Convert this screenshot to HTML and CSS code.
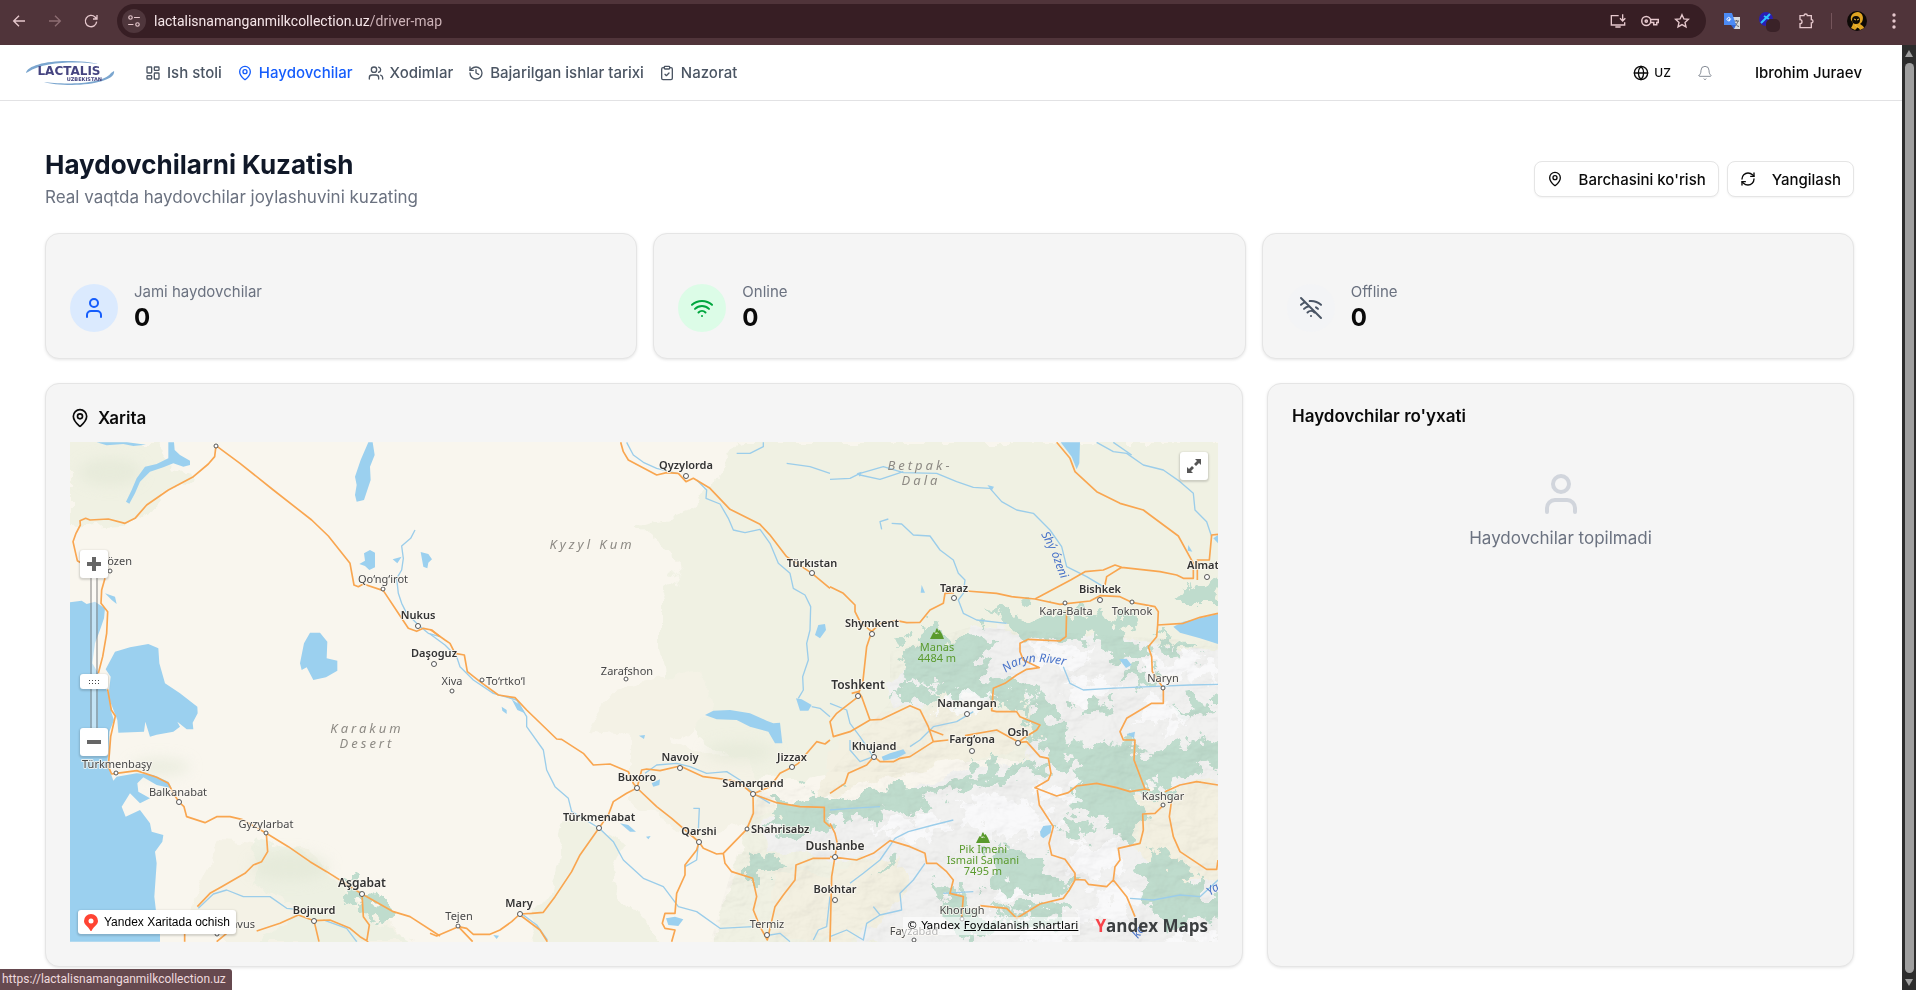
FILE: index.html
```html
<!DOCTYPE html>
<html lang="uz">
<head>
<meta charset="utf-8">
<title>Haydovchilarni Kuzatish</title>
<link rel="stylesheet" href="styles.css">
</head>
<body>
<svg class="sprite" aria-hidden="true">
  <symbol id="pin" viewBox="0 0 24 24"><path d="M20 10c0 4.993-5.539 10.193-7.399 11.799a1 1 0 0 1-1.202 0C9.539 20.193 4 14.993 4 10a8 8 0 0 1 16 0"/><circle cx="12" cy="10" r="3"/></symbol>
  <symbol id="user" viewBox="0 0 24 24"><path d="M19 21v-2a4 4 0 0 0-4-4H9a4 4 0 0 0-4 4v2"/><circle cx="12" cy="7" r="4"/></symbol>
  <symbol id="peak" viewBox="0 0 14 11"><path d="M0 11 2.500 6l1.200-2 1.400.6L6 1.500 7 0l1.600 3 1-1L12 6l2 5z"/><path d="M5 4.500 6.200 6 7 4.500 8.500 6" fill="none" stroke="#eef3e6" stroke-width=".8"/></symbol>
</svg>

<header class="chrome">
  <button class="chrome-btn" aria-label="Back"><svg class="ico" viewBox="0 0 24 24"><path d="M21 12H4M12 4l-8 8 8 8"/></svg></button>
  <button class="chrome-btn dim" aria-label="Forward"><svg class="ico" viewBox="0 0 24 24"><path d="M3 12h17M12 4l8 8-8 8"/></svg></button>
  <button class="chrome-btn" aria-label="Reload"><svg class="ico" viewBox="0 0 24 24"><path d="M20.500 13A8.500 8.500 0 1 1 18 6l2.500 2.500M21 3v6h-6"/></svg></button>
  <div class="omnibox">
    <button class="site-info" aria-label="Site information"><svg class="ico" viewBox="0 0 24 24"><circle cx="6" cy="6" r="3"/><path d="M12 6h10M2 18h9"/><circle cx="18" cy="18" r="3"/></svg></button>
    <span class="url">lactalisnamanganmilkcollection.uz<span class="url-path">/driver-map</span></span>
    <button class="chrome-btn" aria-label="Install"><svg class="ico" viewBox="0 0 24 24"><path d="M13 4H2v14h20v-4M8 21h8M19 2v9M15 8l4 4 4-4"/></svg></button>
    <button class="chrome-btn" aria-label="Passwords"><svg class="ico key" viewBox="0 0 24 24"><circle cx="7" cy="12" r="6"/><circle cx="7" cy="12" r="1.500"/><path d="M13 10h10v4h-2v3h-4v-3h-4"/></svg></button>
    <button class="chrome-btn" aria-label="Bookmark"><svg class="ico" viewBox="0 0 24 24"><path d="m12 2.500 2.800 6.300 6.800.7-5.100 4.600 1.500 6.800-6-3.500-6 3.500 1.500-6.800-5.100-4.600 6.800-.7z"/></svg></button>
  </div>
  <div class="extensions">
    <button class="chrome-btn" aria-label="Translate"><svg class="pic" viewBox="0 0 18 18"><path d="M8 5h9v12H11z" fill="#d9dadc"/><path d="M11 9h5M13.500 8v1M15 9c-.5 2-2 4-3.500 5M12 11c1 2 2 3 4 3.500" stroke="#5f6368" fill="none"/><path d="M1 1h8l4 12H1z" fill="#4c8bf5"/><path d="M8 13h5l-2 4z" fill="#3367d6"/><path d="M8.200 7H6v1h1.200A1.700 1.700 0 1 1 6.900 6" stroke="#fff" fill="none"/></svg></button>
    <button class="chrome-btn" aria-label="Extension"><svg class="pic wide" viewBox="0 0 22 22"><circle cx="8" cy="9" r="7" fill="#2a1fb4"/><path d="m3 13 9-9M6 6l5 3" stroke="#2fc3ff" stroke-width="2"/><rect x="8" y="9" width="14" height="13" rx="5" fill="#3a2228"/></svg></button>
    <button class="chrome-btn" aria-label="Extensions"><svg class="ico" viewBox="0 0 24 24"><path d="M3 4h6a2.500 2.500 0 0 1 5 0h6v6a2.500 2.500 0 0 1 0 5v7H3v-6a3 3 0 0 0 0-6z"/></svg></button>
    <span class="divider"></span>
    <button class="chrome-btn" aria-label="Profile"><svg class="avatar" viewBox="0 0 20 20"><circle cx="10" cy="10" r="10" fill="#0d0906"/><path d="M4 9C3 5 6 1 11 1c5 1 6 6 4 10l-2 2c2 1 4 3 4 4l-4 2-2-3-3 3-4-2c1-2 2-3 2-5z" fill="#e0a422"/><ellipse cx="9" cy="9" rx="4" ry="4" fill="#0d0906"/><path d="m7 8 2 1M10 9l2-1M8 14l4 3" stroke="#f0c040"/></svg></button>
    <button class="chrome-btn" aria-label="Menu"><svg class="pic" viewBox="0 0 18 18" fill="#e6c8cd"><circle cx="9" cy="3" r="1.700"/><circle cx="9" cy="9" r="1.700"/><circle cx="9" cy="15" r="1.700"/></svg></button>
  </div>
</header>

<div class="viewport">
<div class="page">
  <nav class="topbar">
    <a class="logo" href="#" aria-label="Lactalis">
      <svg viewBox="0 0 90 28"><path d="M1 14C2 7 20 2 42 2c14 0 24 1 31 3C60 3 20 1 3 13z" fill="#7ba6cf"/><path d="M89 12c2 8-18 14-42 14-12 0-22-1-28-3 14 2 58 4 67-9z" fill="#7ba6cf"/><text x="44" y="16" text-anchor="middle" class="logo-name">LACTALIS</text><text x="77" y="22" text-anchor="end" class="logo-sub">UZBEKISTAN</text></svg>
    </a>
    <div class="links">
      <a href="#"><svg class="ico" viewBox="0 0 24 24"><rect x="3" y="3" width="7" height="9" rx="1"/><rect x="14" y="3" width="7" height="5" rx="1"/><rect x="14" y="12" width="7" height="9" rx="1"/><rect x="3" y="16" width="7" height="5" rx="1"/></svg>Ish stoli</a>
      <a href="#" class="active"><svg class="ico"><use href="#pin"/></svg>Haydovchilar</a>
      <a href="#"><svg class="ico" viewBox="0 0 24 24"><path d="M16 21v-2a4 4 0 0 0-4-4H6a4 4 0 0 0-4 4v2"/><circle cx="9" cy="7" r="4"/><path d="M22 21v-2a4 4 0 0 0-3-3.870M16 3.130a4 4 0 0 1 0 7.750"/></svg>Xodimlar</a>
      <a href="#"><svg class="ico" viewBox="0 0 24 24"><path d="M3 12a9 9 0 1 0 9-9 9.750 9.750 0 0 0-6.740 2.740L3 8"/><path d="M3 3v5h5M12 7v5l4 2"/></svg>Bajarilgan ishlar tarixi</a>
      <a href="#"><svg class="ico" viewBox="0 0 24 24"><rect x="8" y="2" width="8" height="4" rx="1"/><path d="M16 4h2a2 2 0 0 1 2 2v14a2 2 0 0 1-2 2H6a2 2 0 0 1-2-2V6a2 2 0 0 1 2-2h2M9 14l2 2 4-4"/></svg>Nazorat</a>
    </div>
    <div class="account">
      <button class="lang"><svg class="ico" viewBox="0 0 24 24"><circle cx="12" cy="12" r="10"/><path d="M12 2a14.500 14.500 0 0 0 0 20 14.500 14.500 0 0 0 0-20M2 12h20"/></svg>UZ</button>
      <button class="bell" aria-label="Bildirishnomalar"><svg class="ico" viewBox="0 0 24 24"><path d="M10.268 21a2 2 0 0 0 3.464 0M3.262 15.326A1 1 0 0 0 4 17h16a1 1 0 0 0 .740-1.673C19.410 13.956 18 12.499 18 8A6 6 0 0 0 6 8c0 4.499-1.411 5.956-2.738 7.326"/></svg></button>
      <button class="profile">Ibrohim Juraev</button>
    </div>
  </nav>

  <main class="content">
    <div class="heading">
      <div>
        <h1>Haydovchilarni Kuzatish</h1>
        <p>Real vaqtda haydovchilar joylashuvini kuzating</p>
      </div>
      <div class="actions">
        <button class="outline"><svg class="ico"><use href="#pin"/></svg>Barchasini ko'rish</button>
        <button class="outline"><svg class="ico" viewBox="0 0 24 24"><path d="M3 12a9 9 0 0 1 9-9 9.750 9.750 0 0 1 6.740 2.740L21 8"/><path d="M21 3v5h-5M21 12a9 9 0 0 1-9 9 9.750 9.750 0 0 1-6.740-2.740L3 16"/><path d="M8 16H3v5"/></svg>Yangilash</button>
      </div>
    </div>

    <section class="stats">
      <div class="card stat"><span class="badge blue"><svg class="ico"><use href="#user"/></svg></span><div><p>Jami haydovchilar</p><strong>0</strong></div></div>
      <div class="card stat"><span class="badge green"><svg class="ico" viewBox="0 0 24 24"><path d="M12 20h.010M2 8.820a15 15 0 0 1 20 0M5 12.859a10 10 0 0 1 14 0M8.500 16.429a5 5 0 0 1 7 0"/></svg></span><div><p>Online</p><strong>0</strong></div></div>
      <div class="card stat"><span class="badge gray"><svg class="ico" viewBox="0 0 24 24"><path d="M12 20h.010M8.500 16.429a5 5 0 0 1 7 0M5 12.859a10 10 0 0 1 5.170-2.690M19 12.859a10 10 0 0 0-2.007-1.523M2 8.820a15 15 0 0 1 4.177-2.643M22 8.820a15 15 0 0 0-11.288-3.764M2 2l20 20"/></svg></span><div><p>Offline</p><strong>0</strong></div></div>
    </section>

    <section class="panels">
      <div class="card map-card">
        <h2><svg class="ico"><use href="#pin"/></svg>Xarita</h2>
        <div class="map">
          <svg class="map-canvas" viewBox="0 0 1148 500" preserveAspectRatio="xMidYMid slice">
            <defs>
              <filter id="rough" x="-5%" y="-5%" width="110%" height="110%"><feTurbulence type="fractalNoise" baseFrequency=".035" numOctaves="4" seed="4"/><feDisplacementMap in="SourceGraphic" scale="26" xChannelSelector="R" yChannelSelector="G"/></filter>
              <filter id="ragged" x="-5%" y="-5%" width="110%" height="110%"><feTurbulence type="fractalNoise" baseFrequency=".055" numOctaves="5" seed="7"/><feDisplacementMap in="SourceGraphic" scale="48" xChannelSelector="R" yChannelSelector="G"/></filter>
              <filter id="soft" x="-10%" y="-10%" width="120%" height="120%"><feGaussianBlur stdDeviation="7"/></filter>
              <filter id="relief" x="0" y="0" width="100%" height="100%"><feTurbulence type="fractalNoise" baseFrequency=".022 .035" numOctaves="5" seed="9" result="n"/><feDiffuseLighting in="n" surfaceScale="9" lighting-color="#fff" result="l"><feDistantLight azimuth="225" elevation="62"/></feDiffuseLighting><feComposite in="l" in2="SourceGraphic" operator="in"/></filter>
              <path id="shy" d="M971 92C978 105 983 113 985 122 988 131 991 137 998 150"/>
              <path id="naryn" d="M936 231C948 220 966 216 1002 225"/>
            </defs>
            <rect width="1148" height="500" fill="#f9f6ee"/>
            <g filter="url(#rough)">
              <path fill="#f0f1e3" d="M565 84 620 70 668 0H1160V320H830L770 330 690 340 640 300 600 270 590 200 590 160 610 120ZM0 0H90L120 40 60 80 0 85ZM500 370 560 400 540 440 600 510H450L480 450ZM680 370H1160V510H640Z"/>
              <path fill="#f4f2e6" d="M150 400 240 410 290 460 350 510H170L120 470ZM540 250 630 230 640 275 600 300 520 290ZM560 290 680 320 700 370 620 400 560 360Z"/>
              <path fill="#eaf0df" d="M190 395 250 420 290 470 340 500H190L230 470 180 440Z" opacity=".7"/>
            </g>
            <g filter="url(#rough)">
              <path fill="#f1f1f0" d="M905 187 960 192 1010 190 1070 200 1160 215V345L1080 345 1045 380 1080 420 1160 430V510H870L790 500 830 420 700 410 690 380 770 370 880 335 955 320 975 290 960 260 900 240 830 270 820 240 880 215Z"/>
              <path fill="#f3f0e1" d="M775 290 850 262 940 265 965 290 940 312 860 325 800 340 750 360 760 320ZM1065 355 1160 335V430L1110 440 1070 410ZM700 430 760 430 830 410 830 460 780 500H700Z"/>
            </g>
            <g filter="url(#ragged)">
              <path fill="#bfdccd" d="M830 207 850 185 880 192 910 187 930 200 905 212 915 240 900 262 870 248 835 240ZM915 165 960 172 1000 170 1065 178 1050 200 1000 197 950 195ZM1105 150 1130 140 1160 145V162H1115ZM1080 190 1110 200 1140 215 1110 212ZM830 240 870 252 860 262 820 255ZM755 360 800 346 850 345 900 335 925 322 975 318 980 328 950 335 890 347 850 362 790 376 740 384 690 384ZM700 355 745 352 765 366 740 395 712 392ZM965 255 985 270 1000 302 1050 300 1080 310 1160 290V322L1100 340 1075 350 1060 395 1045 398 1035 375 1000 365 1005 330 980 315 960 290ZM925 400 965 415 1005 445 960 455 915 442ZM1080 408 1112 420 1122 445 1160 460V475L1090 480 1065 460 1078 435ZM905 235 950 238 965 258 925 268 900 252ZM690 410 714 416 702 434 680 434ZM270 435 300 445 325 468 310 478 280 458ZM868 445 905 450 902 470 935 480 900 505 875 482ZM1010 256 1045 262 1038 274 1005 268ZM1030 190 1085 210 1060 218 1025 205ZM990 375 1025 380 1015 394 990 388ZM925 470 1000 468 980 484 935 482ZM830 360 870 352 862 366 830 372ZM1060 225 1090 235 1075 245 1050 236ZM1100 262 1148 252V268L1110 275ZM800 425 830 418 825 432Z"/>
              <path fill="#fafafb" opacity=".85" d="M950 200 1030 212 1010 222 960 218ZM1070 215 1148 220V235L1090 238ZM1000 235 1045 240 1020 258 985 248ZM890 360 955 358 995 385 950 398 895 382ZM960 342 1015 350 990 366ZM1000 400 1045 400 1055 428 1005 432ZM1040 440 1075 450 1052 482 1005 478ZM1080 255 1125 270 1100 288 1065 280ZM930 445 965 455 920 468ZM800 385 860 372 880 390 830 400ZM960 480 1010 485 990 505 950 500ZM1110 480 1148 488V505H1100ZM890 250 930 255 900 275 870 266Z"/>
            </g>
            <path filter="url(#relief)" opacity=".12" class="relief" d="M820 210 900 185 1148 200V500H640L670 400 690 350 830 330 760 330 820 260Z"/>
            <g filter="url(#soft)" fill="#dfe5d3" opacity=".5"><ellipse cx="220" cy="425" rx="40" ry="14"/><ellipse cx="90" cy="325" rx="30" ry="9"/><ellipse cx="670" cy="310" rx="35" ry="10"/><ellipse cx="40" cy="30" rx="32" ry="14"/></g>

            <g class="water" transform="translate(-30 -12) scale(.33333)">
              <path d="M170 37H262L318 44 280 48 250 42 200 46ZM385 37H402L404 60 420 75 450 92V105L430 110 400 100 370 112 330 125 300 155 285 190 268 221 258 215 275 180 290 145 315 110 350 102 385 85ZM985 37H998L1004 75 990 110 992 150 972 210 950 215 945 195 950 165 945 140 962 90ZM958 402 975 392 972 370 990 360 1005 368V412L988 420 975 408ZM1142 366 1165 372 1176 388 1165 398 1162 415 1150 410ZM1058 388 1085 380 1072 400ZM792 640 810 608 840 608 862 635 860 685 892 692V722L858 742 820 750 800 712 785 720 780 700ZM195 490 225 500 230 522 215 510Z"/>
              <path d="M197 718 225 665 270 652 325 642 355 655 358 700 375 760 420 790 472 830 473 850 458 878 460 898 440 898 412 875 420 890 400 905 350 914 330 920 316 875 312 905 235 908 232 870 205 800 212 740Z"/>
              <path d="M90 517 125 512 140 522 165 515 195 535 192 565 180 600 165 640 157 700 172 725 205 790 215 850 222 870 208 905 205 960 202 1000 220 1052 230 1040 290 1030 340 1035 385 1055 395 1075 350 1065 310 1042 292 1060 295 1085 330 1105 300 1120 270 1090 245 1130 257 1160 300 1140 330 1180 335 1205 370 1215 367 1235 345 1265 350 1300 343 1400 350 1460 360 1500V1535H90Z"/>
            </g>
            <g class="water" transform="translate(360 -12) scale(.33333)">
              <path d="M825 855 850 842 900 840 960 850 1010 872 1030 880 1050 878 1057 940 1035 940 1015 905 960 890 920 870 860 868ZM1155 615 1165 585 1185 582 1188 600 1170 625ZM1098 805 1115 808 1145 825 1135 842 1110 842ZM665 1060 690 1048 688 1065 670 1070ZM570 1180 595 1185 618 1205 600 1205ZM708 1465 735 1460 760 1468 745 1488 715 1485ZM627 917 645 915 642 927ZM215 830 230 840 230 852 217 842ZM245 808 270 825 285 850 262 840ZM648 1220 662 1218 655 1228ZM190 1515 207 1517 200 1527Z"/>
            </g>
            <g class="water" transform="translate(760 -12) scale(.33333)">
              <path d="M692 37H750L748 100 740 118 725 80ZM1030 590 1060 575 1164 552V642L1110 625 1050 608ZM868 688 890 686 905 705 888 714ZM275 465 285 488 272 488ZM80 130 95 125 90 140ZM472 165 492 170 485 182ZM1075 345 1087 365 1073 362ZM1150 325 1164 315V340ZM155 980 180 970 220 958 228 970 200 985 160 992ZM630 1205 640 1188 665 1185 662 1208 640 1225 632 1218ZM890 912 915 905 912 925Z"/>
            </g>
            <g class="river">
              <path transform="translate(-30 -12) scale(.33333)" d="M1125 300 1112 325 1085 348 1090 385 1085 420 1070 445 1075 490 1085 520 1100 550 1135 585 1165 610 1200 620M475 1435 520 1392 560 1380 610 1400 690 1400 740 1435 770 1438M850 1470 920 1495 950 1535"/>
              <path transform="translate(360 -12) scale(.33333)" d="M590 37 610 75 640 97 680 115 740 130M800 150 830 180 828 205 870 222 895 265 910 300 945 308 990 298 1020 340 1045 400 1080 430 1090 475 1125 495 1142 530 1140 600 1130 640 1135 690 1118 740 1120 780 1105 805M1145 830 1170 835 1200 860M0 612 45 645 80 680 90 710 130 750 190 790 260 810 290 860 290 890 340 960 350 1020 375 1070 415 1105 425 1145 507 1194 550 1235 580 1290 640 1345 700 1370 745 1430 800 1445 870 1495 970 1490M790 1135H808L805 1200M645 1030 680 1005 740 1000 780 1010 830 1030 890 1025 930 1050 970 1090 1020 1120M920 70 960 70 1000 50V37M1070 100 1140 110 1200 130M805 1240 800 1290 765 1310M280 1455 320 1485 352 1530M1020 1515 1050 1510 1080 1535M1150 1530 1165 1500 1190 1490 1200 1400"/>
              <path transform="translate(760 -12) scale(.33333)" d="M0 148 60 145 90 130 160 110 220 128 320 130 380 155 430 172 480 175 515 215 560 240 610 250 660 300 695 350 710 410 770 440 820 470M90 135 150 148 220 125M155 298 150 275 175 267M185 280 215 282 250 315 300 318 330 360 370 390 385 430 405 450 400 490 385 510 400 550 440 570 530 580M800 37 850 65 890 70 940 105 1000 120 1050 155 1090 190 1095 240 1130 275 1145 320M850 37 905 75M700 710 720 760 760 780 840 775 960 770 1080 765 1164 763M430 845 380 875 310 890 270 930 240 950M0 820 50 840 60 880 90 920 130 980M60 930 60 960 90 995 130 980M0 1140 60 1135 150 1130M195 1225 235 1205 310 1185 370 1170M195 1225 150 1290 100 1330 60 1360M285 1300 250 1350 210 1390 215 1440 150 1455 110 1480 100 1530 50 1500 0 1520M130 1430 150 1455M900 1405 970 1410 1050 1395 1110 1400 1164 1350M430 1385 340 1390"/>
            </g>
            <g class="road">
              <path transform="translate(-30 -12) scale(.33333)" d="M528 47 524 80 505 102 460 140 385 180 320 225 285 265 255 280 205 267 150 270 137 265 120 272 121 285 108 310 99 335 112 392 125 400M528 47 600 100 700 180 815 270 865 318 930 400 942 465 955 470 970 462 1030 482 1075 550 1105 595 1130 604 1150 595 1175 600 1200 620M195 445 185 480 183 520 203 545 200 610 188 680 175 730M203 778 214 840 226 858 212 920 205 1010 215 1032 229 1030 290 1022 350 1042 385 1060 400 1090 417 1116 432 1130 440 1160 495 1178 530 1160 570 1160 605 1168 679 1210 745 1250 810 1295 860 1325 966 1392 1060 1445 1110 1460 1200 1518M679 1210 683 1265 665 1295 640 1305 615 1330 545 1370 510 1390 472 1430M530 1535 560 1510M650 1503 720 1480 775 1455 822 1472 870 1470 930 1495 960 1520 985 1535M822 1472 837 1535M966 1392 970 1460 988 1485 980 1535M434 1510V1535"/>
              <path transform="translate(360 -12) scale(.33333)" d="M572 37 580 65 595 90 680 135 710 128 745 130 768 155 790 145 840 175 900 238 990 283 1020 315 1070 380 1146 430 1200 475M0 598 45 630 60 640 75 670 103 675 112 725 150 755 205 795 255 803 290 840 380 927 395 928 460 970 490 1005 540 1002 595 1025 610 1060 621 1074 680 1130 725 1165 807 1236M621 1074 590 1090 550 1115 535 1155 507 1194 450 1275 425 1325 375 1400 340 1447 305 1450 270 1452 245 1475 210 1500 180 1513H130L110 1495 85 1490 20 1518 0 1510M270 1455 330 1500 352 1535M85 1490 128 1535M621 1074 635 1020 650 1017 690 1022 750 1008 820 1040 900 1050 930 1060 969 1092 1040 1118 1110 1130 1183 1132V1175L1200 1190M969 1092 1020 1070 1050 1030 1086 1012 1105 1000 1160 935 1185 942 1200 930M969 1092 970 1150 950 1198 880 1270 860 1272 820 1255 807 1236 800 1260 765 1305V1335L740 1390 735 1450H705L697 1480 705 1495 735 1500 725 1535M880 1270 885 1300 905 1325 968 1345 980 1400 970 1440 990 1490 1012 1530 1035 1430 1060 1395 1095 1350 1098 1305 1150 1285H1200"/>
              <path transform="translate(760 -12) scale(.33333)" d="M0 470 40 490 75 525V545L90 575 125 605 110 650 98 760 85 790M125 605 150 580 200 572 230 578 270 577 300 540 340 520 345 490 372 488M410 483 500 490 545 500 615 507 690 523 780 513 810 497 870 500 905 517 975 530 985 545 983 585 1060 580 1110 562 1164 550M615 507 722 450 765 425 820 420 855 405 875 412 990 425 1040 435 1060 445H1090V400L1045 318 960 255 940 240 870 220 800 185 735 125 720 85 680 37M875 412 830 440 825 465M1102 450V390H1138L1145 315 1164 313M983 585 980 620 955 650 965 680 967 725 1000 775V820L965 820 890 865 870 905 880 930H915L912 990 945 1077M710 540 708 620 690 633 595 628 570 640V665L580 690 628 713 590 718 560 735 525 760 490 775 485 842 500 845 560 845 570 860 630 885 620 900 580 925 564 938 590 935 630 980 655 985 663 1030 655 1050 615 1073 680 1098 715 1088 740 1068 800 1060 860 1073 900 1085 945 1077 960 1080M622 1080 628 1125 670 1190 657 1240 665 1275 705 1288 735 1330V1348L765 1350 775 1363 830 1370 850 1350 855 1310 870 1290 865 1255 930 1240 940 1200 938 1152 975 1150 1000 1126M850 1350 890 1400 915 1460M735 1350 718 1380 700 1405 630 1422 560 1465 530 1435 450 1427M1005 1085 1050 1065 1100 1055 1164 1065M1025 1110 1018 1160 1030 1220 1050 1265 1130 1318H1160L1164 1290M0 1280 80 1290 130 1270 180 1232 240 1250 285 1270 290 1300H320L350 1325 370 1350 360 1390 400 1400 395 1460M85 800 20 850 0 875 10 920 60 905 120 870 95 800 85 785 65 790M120 870 155 868 240 827 270 840 295 890 310 935 355 930M295 898 340 915M310 935 240 980 210 985 190 995H150L132 980 110 1005 55 1030 45 1060 0 1090M405 917 500 900 564 935M0 1180 15 1210 22 1240 15 1280 5 1340 0 1535"/>
            </g>

            <g class="dot">
              <circle cx="146" cy="4" r="2"/><circle cx="40" cy="129" r="2"/><circle cx="313" cy="147" r="2"/><circle cx="348" cy="184" r="2.500"/><circle cx="364" cy="222" r="2.500"/><circle cx="382" cy="249" r="2"/><circle cx="412" cy="238" r="2"/><circle cx="46" cy="331" r="2"/><circle cx="109" cy="360" r="2.500"/><circle cx="196" cy="391" r="2"/><circle cx="292" cy="452" r="2.500"/><circle cx="244" cy="479" r="2.500"/><circle cx="147" cy="492" r="2"/><circle cx="616" cy="34" r="2.500"/><circle cx="742" cy="131" r="2.500"/><circle cx="556" cy="237" r="2"/><circle cx="610" cy="326" r="2.500"/><circle cx="567" cy="346" r="2.500"/><circle cx="722" cy="325" r="2.500"/><circle cx="683" cy="352" r="2.500"/><circle cx="529" cy="386" r="2.500"/><circle cx="629" cy="400" r="2.500"/><circle cx="677" cy="387" r="2"/><circle cx="765" cy="415" r="2.500"/><circle cx="765" cy="458" r="2.500"/><circle cx="450" cy="472" r="2.500"/><circle cx="388" cy="484" r="2"/><circle cx="697" cy="493" r="2.500"/><circle cx="802" cy="192" r="2.500"/><circle cx="884" cy="156" r="2.500"/><circle cx="788" cy="254" r="2.500"/><circle cx="995" cy="161" r="2"/><circle cx="1030" cy="158" r="2.500"/><circle cx="1062" cy="160" r="2"/><circle cx="1137" cy="135" r="2.500"/><circle cx="1093" cy="246" r="2"/><circle cx="897" cy="272" r="2.500"/><circle cx="902" cy="309" r="2.500"/><circle cx="948" cy="301" r="2.500"/><circle cx="804" cy="315" r="2.500"/><circle cx="1093" cy="363" r="2"/><circle cx="892" cy="477" r="2"/><circle cx="844" cy="498" r="2"/>
            </g>
            <g class="town">
              <text x="62" y="123" class="end">Jańaözen</text><text x="313" y="141">Qo‘ng‘irot</text><text x="382" y="243">Xiva</text><text x="416" y="243" class="start">To‘rtko‘l</text><text x="47" y="326">Türkmenbaşy</text><text x="108" y="354">Balkanabat</text><text x="196" y="386">Gyzylarbat</text><text x="185" y="486" class="end">Gonbad-e Kavus</text><text x="557" y="233">Zarafshon</text><text x="389" y="478">Tejen</text><text x="697" y="486">Termiz</text><text x="996" y="173">Kara-Balta</text><text x="1062" y="173">Tokmok</text><text x="1093" y="240">Naryn</text><text x="1093" y="358">Kashgar</text><text x="892" y="472">Khorugh</text><text x="844" y="493">Fayzabad</text>
            </g>
            <g class="town city">
              <text x="348" y="177">Nukus</text><text x="364" y="215">Daşoguz</text><text x="244" y="472">Bojnurd</text><text x="616" y="27">Qyzylorda</text><text x="742" y="125">Türkıstan</text><text x="610" y="319">Navoiy</text><text x="567" y="339">Buxoro</text><text x="722" y="319">Jizzax</text><text x="683" y="345">Samarqand</text><text x="529" y="379">Türkmenabat</text><text x="629" y="393">Qarshi</text><text x="681" y="391" class="start">Shahrisabz</text><text x="765" y="451">Bokhtar</text><text x="449" y="465">Mary</text><text x="802" y="185">Shymkent</text><text x="884" y="150">Taraz</text><text x="897" y="265">Namangan</text><text x="902" y="301">Farg‘ona</text><text x="948" y="294">Osh</text><text x="804" y="308">Khujand</text><text x="1030" y="151">Bishkek</text><text x="1117" y="127" class="start">Almaty</text>
            </g>
            <g class="town capital"><text x="292" y="445">Aşgabat</text><text x="765" y="408">Dushanbe</text><text x="788" y="247">Toshkent</text></g>
            <g class="desert"><text x="522" y="107">Kyzyl Kum</text><text x="297" y="291">Karakum</text><text x="297" y="306">Desert</text><text x="850" y="28">Betpak-</text><text x="851" y="43">Dala</text></g>
            <g class="river-name"><text><textPath href="#shy">Shý ózeni</textPath></text><text><textPath href="#naryn">Naryn River</textPath></text><text transform="translate(1140 454) rotate(-35)">Ya</text><text transform="translate(1068 497) rotate(-55)">ke</text></g>
            <g class="peak"><use href="#peak" x="860" y="186" width="14" height="11"/><text x="867" y="209">Manas</text><text x="867" y="220">4484 m</text><use href="#peak" x="906" y="390" width="14" height="11"/><text x="913" y="411">Pik Imeni</text><text x="913" y="422">Ismail Samani</text><text x="913" y="433">7495 m</text></g>
          </svg>
          <div class="zoom">
            <button class="map-btn" aria-label="Yaqinlashtirish"><svg class="glyph" viewBox="0 0 14 14"><path d="M7 0v14M0 7h14"/></svg></button>
            <input type="range" min="0" max="100" value="29" aria-label="Masshtab">
            <button class="map-btn" aria-label="Uzoqlashtirish"><svg class="glyph" viewBox="0 0 14 14"><path d="M0 7h14"/></svg></button>
          </div>
          <button class="map-btn fullscreen" aria-label="To'liq ekran"><svg class="arrows" viewBox="0 0 16 16"><path d="M9 1h6v6l-2-2-3 3-2-2 3-3zM7 15H1V9l2 2 3-3 2 2-3 3z"/></svg></button>
          <button class="open-map"><svg viewBox="0 0 14 17"><path d="M7 0a7 7 0 0 1 7 7c0 4-4 5-6 9a1 1 0 0 1-2 0C4 12 0 11 0 7a7 7 0 0 1 7-7z" fill="#f43"/><circle cx="7" cy="7" r="2.500" fill="#fff"/></svg>Yandex Xaritada ochish</button>
          <div class="credits"><span class="terms">© Yandex <a href="#">Foydalanish shartlari</a></span><a class="brand" href="#"><span>Y</span>andex Maps</a></div>
        </div>
      </div>
      <div class="card list-card">
        <h2>Haydovchilar ro'yxati</h2>
        <div class="empty"><svg class="ico"><use href="#user"/></svg><p>Haydovchilar topilmadi</p></div>
      </div>
    </section>
  </main>
</div>
<div class="scrollbar"><span class="arrow up"></span><span class="thumb"></span><span class="arrow down"></span></div>
</div>
<div class="status">https://lactalisnamanganmilkcollection.uz</div>
</body>
</html>
```
FILE: styles.css
```css
* { box-sizing: border-box; }
body { margin: 0; display: flex; flex-direction: column; min-height: 100vh; background: #fff; color: #0a0a0a; font-family: Inter, "Noto Sans", sans-serif; }
h1, h2, p { margin: 0; }
button { font: inherit; color: inherit; background: none; border: 0; padding: 0; display: inline-flex; align-items: center; justify-content: center; }
a { color: inherit; text-decoration: none; }
.sprite { position: absolute; width: 0; height: 0; }
.ico { width: 16px; height: 16px; flex: none; fill: none; stroke: currentColor; stroke-width: 2; stroke-linecap: round; stroke-linejoin: round; }

/* Browser bar */
.chrome { display: flex; align-items: center; height: 45px; padding: 0 10px 3px 7px; background: #50343a; color: #e6c8cd; }
.chrome-btn { width: 24px; height: 24px; flex: none; }
.chrome > .chrome-btn { margin-right: 12px; }
.chrome .ico { stroke-width: 2; stroke-linecap: butt; stroke-linejoin: miter; }
.chrome .key { width: 18px; height: 18px; }
.dim { color: #8d6d73; }
.omnibox { flex: 1; display: flex; align-items: center; gap: 8px; height: 34px; margin-left: 2px; padding: 0 12px 0 5px; border-radius: 17px; background: #371e24; }
.site-info { width: 24px; height: 24px; border-radius: 12px; background: #4f363c; }
.site-info .ico { width: 14px; height: 14px; }
.url { flex: 1; font: 14px Roboto, "Noto Sans", sans-serif; color: #f6e6e9; }
.url-path { color: #cdb3b8; }
.extensions { display: flex; align-items: center; gap: 13px; padding-left: 14px; }
.pic { width: 18px; height: 18px; }
.wide { width: 22px; height: 22px; }
.avatar { width: 20px; height: 20px; }
.divider { width: 1px; height: 16px; background: #75555b; }

/* Viewport */
.viewport { flex: 1; display: flex; }
.page { flex: 1; min-width: 0; display: flex; flex-direction: column; }
.scrollbar { width: 14px; display: flex; flex-direction: column; align-items: center; gap: 6px; padding: 5px 0 4px; background: #2c2c2c; }
.thumb { width: 9px; flex: 1; border-radius: 5px; background: #9f9f9f; }
.arrow { border: 4px solid transparent; }
.up { border-top: 0; border-bottom: 7px solid #9f9f9f; }
.down { border-bottom: 0; border-top: 7px solid #9f9f9f; }

/* Navigation */
.topbar { display: flex; align-items: center; height: 56px; padding: 0 40px 0 25px; border-bottom: 1px solid #e2e2e4; font-size: 15px; font-weight: 500; }
.logo svg { display: block; width: 90px; height: 28px; }
.logo { margin-right: 30px; }
.logo-name { font: bold 12px "DejaVu Sans", sans-serif; fill: #454480; }
.logo-sub { font: bold 5px "DejaVu Sans", sans-serif; fill: #454480; }
.links { display: flex; gap: 15px; color: #4b5563; }
.links a { display: flex; align-items: center; gap: 6px; }
.links .active { color: #155dfc; }
.account { margin-left: auto; display: flex; align-items: center; }
.lang { gap: 5px; font-size: 12px; }
.bell { margin: 0 42px 0 26px; color: #4b5563; }
.bell .ico { stroke-width: 1; }

/* Content */
.content { flex: 1; padding: 48px 48px 23px 45px; }
.heading { display: flex; align-items: center; justify-content: space-between; margin-bottom: 24px; }
h1 { font-size: 26px; line-height: 32px; font-weight: 700; color: #101828; }
.heading p { font-size: 17px; line-height: 24px; color: #6b7280; margin-top: 4px; }
.actions { display: flex; gap: 8px; }
.outline { gap: 16px; height: 36px; padding: 0 12px; border: 1px solid #e5e5e5; border-radius: 8px; background: #fff; font-size: 15px; font-weight: 500; box-shadow: 0 1px 2px #0000000d; }
.card { border: 1px solid #e5e5e5; border-radius: 14px; background: #f5f5f5; box-shadow: 0 1px 3px #0000001a; padding: 24px; }
.stats { display: grid; grid-template-columns: repeat(3, 1fr); gap: 16px; margin-bottom: 24px; }
.stat { display: flex; align-items: center; gap: 16px; padding-top: 48px; }
.badge { width: 48px; height: 48px; border-radius: 24px; display: flex; align-items: center; justify-content: center; }
.badge .ico { width: 24px; height: 24px; }
.blue { background: #dbeafe; color: #155dfc; }
.green { background: #dcfce7; color: #00a63e; }
.gray { background: #f3f4f6; color: #4a5565; }
.stat p { font-size: 15px; line-height: 20px; color: #6b7280; }
.stat strong { display: block; font-size: 24px; line-height: 32px; }
.panels { display: grid; grid-template-columns: repeat(3, 1fr); gap: 24px; }
.map-card { grid-column: span 2; }
.panels h2 { display: flex; align-items: center; gap: 8px; font-size: 17px; font-weight: 600; }
.panels h2 .ico { width: 20px; height: 20px; }
.map-card h2 { height: 20px; margin-bottom: 14px; }
.list-card h2 { height: 16px; }
.empty { display: flex; flex-direction: column; align-items: center; gap: 8px; padding-top: 46px; font-size: 17px; line-height: 24px; color: #6b7280; }
.empty .ico { width: 48px; height: 48px; color: #d1d5dc; }

/* Map */
.map { position: relative; height: 500px; overflow: hidden; }
.map-canvas { display: block; width: 100%; height: 100%; }
.relief { mix-blend-mode: multiply; }
.water { fill: #9bd0ef; }
.river { fill: none; stroke: #9bcdea; stroke-width: 4; stroke-linejoin: round; }
.road { fill: none; stroke: #f9a650; stroke-width: 5; stroke-linejoin: round; }
.dot { fill: #fff; stroke: #555; stroke-width: 1; }
.town { font: 11px "Noto Sans", sans-serif; fill: #484848; text-anchor: middle; stroke: #faf8f1; stroke-width: 2; paint-order: stroke; stroke-opacity: .8; stroke-linejoin: round; }
.city { font-weight: 600; fill: #333; }
.capital { font-size: 12px; font-weight: 600; fill: #333; }
.town .start { text-anchor: start; }
.town .end { text-anchor: end; }
.desert { font: italic 13px "Noto Sans", sans-serif; letter-spacing: 3px; fill: #8d8a84; text-anchor: middle; }
.river-name { font: italic 12px "Noto Sans", sans-serif; fill: #4a74c9; }
.peak { font: 11px "Noto Sans", sans-serif; fill: #5a9a2d; text-anchor: middle; }
.map-btn { width: 28px; height: 28px; border-radius: 3px; background: #fff; box-shadow: 0 1px 2px 1px #00000026; }
.glyph { width: 14px; height: 14px; stroke: #666; stroke-width: 4; }
.arrows { width: 16px; height: 16px; fill: #555; }
.zoom { position: absolute; left: 10px; top: 108px; display: flex; flex-direction: column; }
.zoom input { appearance: none; writing-mode: vertical-lr; direction: rtl; width: 28px; height: 150px; margin: 0; background: linear-gradient(90deg, transparent 10px, #8888 10px, #8888 12px, #fff6 12px, #fff6 16px, #8888 16px, #8888 18px, transparent 18px); }
.zoom input::-webkit-slider-thumb { appearance: none; width: 28px; height: 15px; border-radius: 3px; background: repeating-linear-gradient(90deg, #444 0 1px, transparent 1px 3px) 9px 6px / 10px 1px no-repeat, repeating-linear-gradient(90deg, #444 0 1px, transparent 1px 3px) 9px 9px / 10px 1px no-repeat, #fff; box-shadow: 0 1px 2px 1px #00000026; }
.fullscreen { position: absolute; right: 10px; top: 10px; }
.open-map { position: absolute; left: 8px; bottom: 8px; height: 24px; gap: 6px; padding: 0 6px; border-radius: 3px; background: #fff; box-shadow: 0 1px 2px 1px #00000026; font: 12px "Liberation Sans", sans-serif; color: #000; }
.open-map svg { width: 14px; height: 17px; }
.credits { position: absolute; right: 10px; bottom: 4px; display: flex; align-items: center; gap: 15px; }
.terms { padding: 0 2px 0 4px; background: #ffffff99; font: 11px/18px "DejaVu Sans", sans-serif; color: #000; }
.terms a { text-decoration: underline; }
.brand { font: bold 17px/24px "Open Sans", sans-serif; color: #3c3f41; }
.brand span { color: #f8434a; }

/* Link preview */
.status { position: fixed; left: 0; bottom: 0; height: 21px; padding: 0 6px 0 2px; border-top-right-radius: 3px; background: #66494f; color: #efdade; font: 12px/20px Roboto, "Noto Sans", sans-serif; }
```
